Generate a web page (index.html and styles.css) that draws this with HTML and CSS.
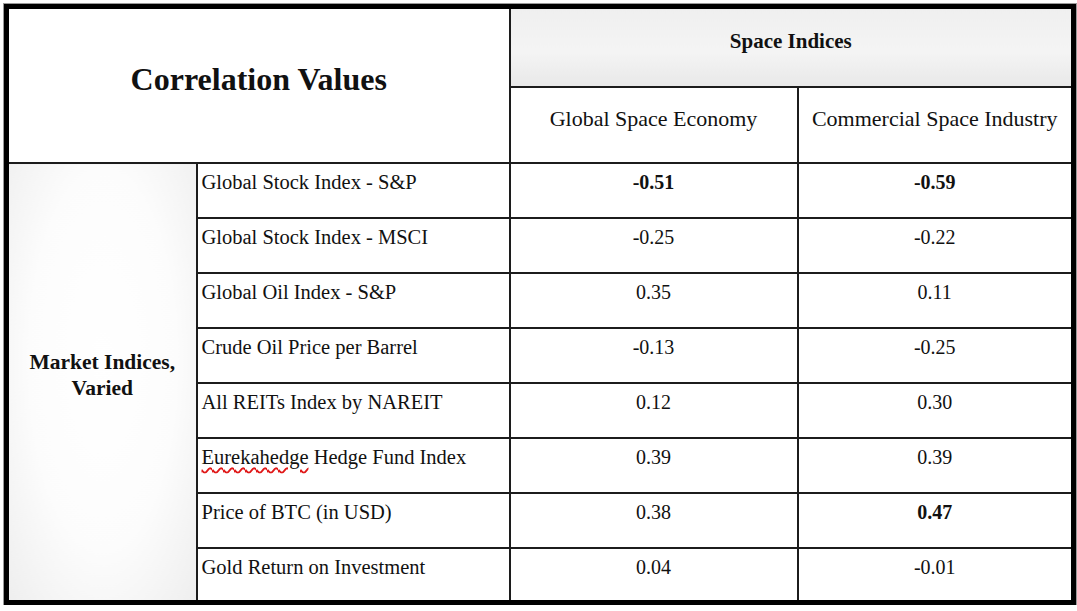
FILE: index.html
```html
<!DOCTYPE html>
<html>
<head>
<meta charset="utf-8">
<link rel="stylesheet" href="styles.css">
</head>
<body>
<table class="corr">
  <colgroup>
    <col class="c1"><col class="c2"><col class="c3"><col class="c4">
  </colgroup>
  <tr class="r-top">
    <th colspan="2" rowspan="2" class="title">Correlation Values</th>
    <th colspan="2" class="space">Space Indices</th>
  </tr>
  <tr class="r-sub">
    <td class="sub">Global Space Economy</td>
    <td class="sub">Commercial Space Industry</td>
  </tr>
  <tr class="r-data">
    <th rowspan="8" class="market">Market Indices,<br>Varied</th>
    <td class="label">Global Stock Index - S&amp;P</td>
    <td class="num b">-0.51</td>
    <td class="num b">-0.59</td>
  </tr>
  <tr class="r-data">
    <td class="label">Global Stock Index - MSCI</td>
    <td class="num">-0.25</td>
    <td class="num">-0.22</td>
  </tr>
  <tr class="r-data">
    <td class="label">Global Oil Index - S&amp;P</td>
    <td class="num">0.35</td>
    <td class="num">0.11</td>
  </tr>
  <tr class="r-data">
    <td class="label">Crude Oil Price per Barrel</td>
    <td class="num">-0.13</td>
    <td class="num">-0.25</td>
  </tr>
  <tr class="r-data">
    <td class="label">All REITs Index by NAREIT</td>
    <td class="num">0.12</td>
    <td class="num">0.30</td>
  </tr>
  <tr class="r-data">
    <td class="label"><span class="spell">Eurekahedge</span> Hedge Fund Index</td>
    <td class="num">0.39</td>
    <td class="num">0.39</td>
  </tr>
  <tr class="r-data">
    <td class="label">Price of BTC (in USD)</td>
    <td class="num">0.38</td>
    <td class="num b">0.47</td>
  </tr>
  <tr class="r-data">
    <td class="label">Gold Return on Investment</td>
    <td class="num">0.04</td>
    <td class="num">-0.01</td>
  </tr>
</table>
</body>
</html>
```

FILE: styles.css
```css
html, body {
  margin: 0;
  padding: 0;
  background: #ffffff;
}

body {
  font-family: "Liberation Serif", "Times New Roman", serif;
  color: #111;
}

.corr {
  margin: 4px 0 0 4px;
  width: 1072px;
  border-collapse: collapse;
  border: 5px solid #000;
  box-shadow: 0 0 0 1px #9a9a9a;
  table-layout: fixed;
}

.c1 { width: 190px; }
.c2 { width: 313px; }
.c3 { width: 288px; }
.c4 { width: auto; }

.corr th,
.corr td {
  border: 2px solid #1c1c1c;
  padding: 0;
}

.corr .r-top { height: 80px; }
.corr .r-sub { height: 76px; }
.corr .r-data { height: 55px; }

.corr .title {
  font-size: 32px;
  font-weight: bold;
  text-align: center;
  vertical-align: middle;
  padding-bottom: 12px;
  background: #fff;
}

.corr .space {
  font-size: 21px;
  font-weight: bold;
  text-align: center;
  vertical-align: middle;
  padding-bottom: 12px;
  background: linear-gradient(180deg, #efefef 0%, #f4f4f4 55%, #e8e8e8 100%);
}

.corr .sub {
  font-size: 22px;
  text-align: center;
  vertical-align: middle;
  padding-bottom: 12px;
  background: #fff;
}

.corr .market {
  font-size: 21.5px;
  font-weight: bold;
  text-align: center;
  vertical-align: middle;
  line-height: 26px;
  padding-bottom: 14px;
  background: radial-gradient(ellipse at 50% 45%, #ffffff 0%, #fcfcfc 55%, #eeeeee 100%);
}

.corr .label {
  font-size: 20.5px;
  vertical-align: top;
  padding: 7px 0 0 4px;
  white-space: nowrap;
  background: #fff;
}

.corr .num {
  font-size: 20px;
  text-align: center;
  vertical-align: top;
  padding-top: 7px;
  background: #fff;
}

.b { font-weight: bold; }

.spell {
  text-decoration: underline wavy #e01818;
  text-decoration-thickness: 1.5px;
  text-underline-offset: 3px;
}
```
